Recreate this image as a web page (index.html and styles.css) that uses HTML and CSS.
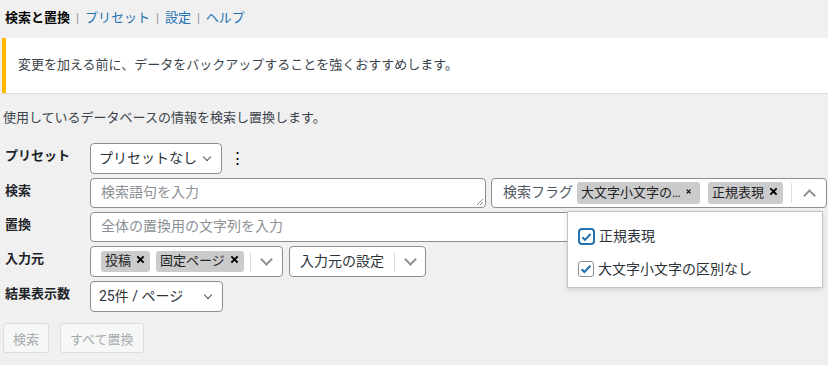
FILE: index.html
```html
<!DOCTYPE html>
<html lang="ja">
<head>
  <meta charset="UTF-8">
  <title>検索と置換</title>
  <link rel="stylesheet" href="styles.css">
</head>
<body>
  <div class="wrap">
    <nav class="subnav">
      <strong>検索と置換</strong><span class="sep">|</span><a href="#">プリセット</a><span class="sep">|</span><a href="#">設定</a><span class="sep">|</span><a href="#">ヘルプ</a>
    </nav>

    <div class="notice">変更を加える前に、データをバックアップすることを強くおすすめします。</div>

    <p class="intro">使用しているデータベースの情報を検索し置換します。</p>

    <div class="form">
      <div class="row">
        <label class="label">プリセット</label>
        <div class="field">
          <div class="select preset">プリセットなし<span class="chev small"></span></div>
          <span class="kebab">⋮</span>
        </div>
      </div>

      <div class="row">
        <label class="label">検索</label>
        <div class="field">
          <div class="input search">検索語句を入力<span class="grip"></span></div>
          <div class="multi flags">
            <span class="multi-label">検索フラグ</span>
            <span class="chip wide">大文字小文字の…<svg class="x" viewBox="0 0 10 10"><path d="M1.5 1.5l7 7M8.5 1.5l-7 7"/></svg></span>
            <span class="chip">正規表現<svg class="x" viewBox="0 0 10 10"><path d="M1.5 1.5l7 7M8.5 1.5l-7 7"/></svg></span>
            <span class="divider"></span>
            <span class="chev up"></span>
          </div>
        </div>
      </div>

      <div class="row">
        <label class="label">置換</label>
        <div class="field">
          <div class="input replace">全体の置換用の文字列を入力</div>
        </div>
      </div>

      <div class="row">
        <label class="label">入力元</label>
        <div class="field">
          <div class="multi sources">
            <span class="chip">投稿<svg class="x" viewBox="0 0 10 10"><path d="M1.5 1.5l7 7M8.5 1.5l-7 7"/></svg></span>
            <span class="chip">固定ページ<svg class="x" viewBox="0 0 10 10"><path d="M1.5 1.5l7 7M8.5 1.5l-7 7"/></svg></span>
            <span class="divider"></span>
            <span class="chev"></span>
          </div>
          <div class="multi source-opts">
            <span class="multi-text">入力元の設定</span>
            <span class="divider"></span>
            <span class="chev"></span>
          </div>
        </div>
      </div>

      <div class="row">
        <label class="label">結果表示数</label>
        <div class="field">
          <div class="select perpage">25件 / ページ<span class="chev small"></span></div>
        </div>
      </div>
    </div>

    <div class="actions">
      <button class="button" disabled>検索</button>
      <button class="button" disabled>すべて置換</button>
    </div>

    <div class="dropdown">
      <label class="option"><span class="check focus"><svg viewBox="0 0 16 16" width="14" height="14"><path d="M3 8.3l3.2 3.2L13 4.3" fill="none" stroke="#2271b1" stroke-width="2.4"/></svg></span>正規表現</label>
      <label class="option"><span class="check"><svg viewBox="0 0 16 16" width="14" height="14"><path d="M3 8.3l3.2 3.2L13 4.3" fill="none" stroke="#2271b1" stroke-width="2.4"/></svg></span>大文字小文字の区別なし</label>
    </div>
  </div>
</body>
</html>
```

FILE: styles.css
```css
body {
  margin: 0;
  background: #f0f0f1;
  color: #1d2327;
  font-family: Roboto, "Noto Sans CJK JP", sans-serif;
  font-size: 13px;
  line-height: 1.4;
}
.wrap {
  position: relative;
  padding: 0 5px 0 2px;
}
.subnav {
  padding: 9px 0 0 3px;
  height: 20px;
  font-size: 13px;
}
.subnav strong {
  color: #000;
}
.subnav a {
  color: #2271b1;
  text-decoration: none;
}
.subnav .sep {
  color: #8c8f94;
  margin: 0 6px;
  font-size: 12px;
}
.notice {
  margin: 9px -5px 0 0;
  background: #fff;
  border-left: 4px solid #ffb900;
  box-shadow: 0 1px 1px rgba(0, 0, 0, 0.08);
  padding: 17px 12px 18px;
  color: #3c434a;
  line-height: 20px;
}
.intro {
  margin: 15px 0 0 1px;
  line-height: 20px;
  color: #3c434a;
}
.form {
  margin-top: 15px;
  display: flex;
  flex-direction: column;
  gap: 4px;
}
.row {
  display: flex;
  align-items: flex-start;
}
.label {
  flex-shrink: 0;
  width: 85px;
  padding: 4px 0 0 3px;
  font-weight: 700;
  font-size: 13px;
  color: #1d2327;
}
.field {
  flex: 1;
  min-width: 0;
  display: flex;
  align-items: center;
  gap: 6px;
}
.select, .input, .multi {
  flex-shrink: 0;
  box-sizing: border-box;
  height: 31px;
  background: #fff;
  border: 1px solid #8c8f94;
  border-radius: 4px;
  display: flex;
  align-items: center;
  font-size: 14px;
  color: #2c3338;
  white-space: nowrap;
}
.select {
  padding: 0 8px;
  justify-content: space-between;
}
.preset {
  width: 132px;
}
.perpage {
  width: 133px;
}
.kebab {
  font-size: 17px;
  color: #000;
  margin-left: 1px;
}
.input {
  padding: 0 10px;
  color: #8c8f94;
  position: relative;
}
.search {
  width: 396px;
  height: 30px;
}
.replace {
  flex: 1;
  height: 30px;
}
.grip {
  position: absolute;
  right: 2px;
  bottom: 2px;
  width: 6px;
  height: 6px;
  background: linear-gradient(135deg, transparent 45%, #8c8f94 45%, #8c8f94 55%, transparent 55%, transparent 70%, #8c8f94 70%, #8c8f94 80%, transparent 80%);
}
.multi {
  padding: 0 0 0 10px;
  gap: 6px;
}
.flags {
  flex: 1;
  flex-shrink: 1;
  height: 30px;
  margin-left: -1px;
  padding-left: 11px;
  gap: 8px;
}
.multi-label {
  color: #50575e;
  margin-right: -4px;
}
.chip {
  flex-shrink: 0;
  display: inline-flex;
  align-items: center;
  gap: 5px;
  background: #cbcbcb;
  border-radius: 3px;
  height: 22px;
  padding: 0 5px 0 4px;
  font-size: 13px;
  color: #1d2327;
}
.chip.wide {
  width: 123px;
  box-sizing: border-box;
  justify-content: space-between;
  padding-right: 9px;
}
.sources .chip {
  height: 21px;
}
.sources {
  width: 193px;
  padding-left: 10px;
}
.x {
  width: 9px;
  height: 9px;
  margin-top: -4px;
  fill: none;
  stroke: #000;
  stroke-width: 2.2;
}
.divider {
  flex-shrink: 0;
  width: 1px;
  height: 20px;
  background: #dcdcde;
  margin-left: auto;
}
.chev {
  flex-shrink: 0;
  width: 7px;
  height: 7px;
  border-right: 2px solid #8c8f94;
  border-bottom: 2px solid #8c8f94;
  transform: rotate(45deg);
  margin: -4px 11px 0 5px;
}
.chev.small {
  width: 5px;
  height: 5px;
  border-color: #50575e;
  border-width: 0 1.5px 1.5px 0;
  margin: -3px 3px 0 6px;
}
.chev.up {
  transform: rotate(-135deg);
  margin: 4px 12px 0 5px;
}
.source-opts {
  width: 137px;
  padding-left: 10px;
  color: #2c3338;
}
.source-opts .chev {
  margin-right: 10px;
}
.actions {
  margin: 11px 0 0 1px;
  display: flex;
  gap: 11px;
}
.button {
  font-family: inherit;
  font-size: 13px;
  height: 30px;
  padding: 0 9px;
  background: #f6f7f7;
  border: 1px solid #dcdcde;
  border-radius: 3px;
  color: #a7aaad;
}
.dropdown {
  position: absolute;
  left: 567px;
  top: 211px;
  width: 256px;
  box-sizing: border-box;
  background: #fff;
  border: 1px solid #c3c4c7;
  box-shadow: 0 2px 5px rgba(0, 0, 0, 0.12);
  padding: 15px 10px 8px;
  display: flex;
  flex-direction: column;
  gap: 13px;
}
.option {
  display: flex;
  align-items: center;
  gap: 4px;
  font-size: 14px;
  color: #2c3338;
}
.check {
  width: 16px;
  height: 16px;
  box-sizing: border-box;
  border: 1px solid #8c8f94;
  border-radius: 3px;
  display: flex;
  align-items: center;
  justify-content: center;
}
.check.focus {
  border: 2px solid #2271b1;
  border-radius: 4px;
  width: 17px;
  height: 17px;
}
```
